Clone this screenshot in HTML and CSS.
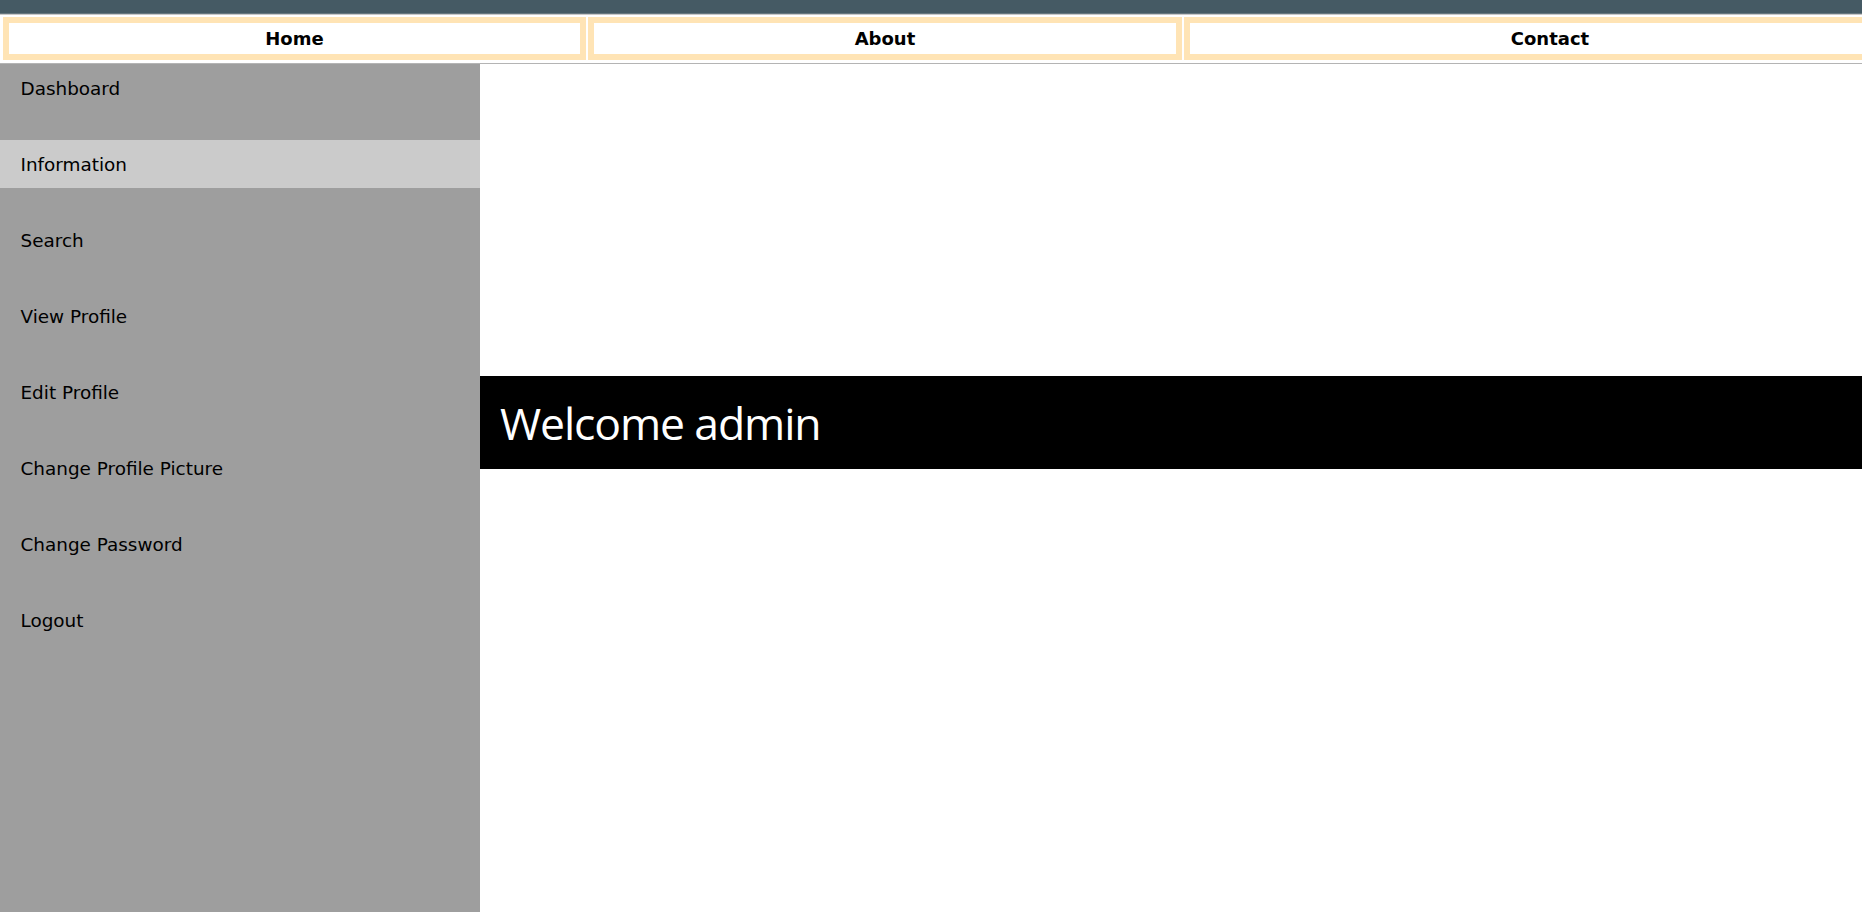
FILE: index.html
```html
<!DOCTYPE html>
<html lang="en">
<head>
<meta charset="utf-8">
<title>Dashboard</title>
<link rel="stylesheet" href="styles.css">
</head>
<body>
<div class="page">
  <div class="topbar"></div>
  <nav class="nav">
    <a class="nav-item nav-home" href="#">Home</a>
    <a class="nav-item nav-about" href="#">About</a>
    <a class="nav-item nav-contact" href="#">Contact</a>
  </nav>
  <div class="layout">
    <aside class="sidebar">
      <a class="side-item" href="#">Dashboard</a>
      <a class="side-item active" href="#">Information</a>
      <a class="side-item" href="#">Search</a>
      <a class="side-item" href="#">View Profile</a>
      <a class="side-item" href="#">Edit Profile</a>
      <a class="side-item" href="#">Change Profile Picture</a>
      <a class="side-item" href="#">Change Password</a>
      <a class="side-item" href="#">Logout</a>
    </aside>
    <main class="content">
      <h1 class="welcome">Welcome admin</h1>
    </main>
  </div>
</div>
</body>
</html>
```
FILE: styles.css
```css
html, body {
  margin: 0;
  padding: 0;
  height: 100%;
  overflow: hidden;
  background: #ffffff;
}

.page {
  width: 1862px;
  height: 912px;
  display: flex;
  flex-direction: column;
  overflow: hidden;
}

.topbar {
  height: 13px;
  background: #455a64;
  border-bottom: 1px solid #66767e;
  flex: none;
}

.nav {
  flex: none;
  display: grid;
  grid-template-columns: 583px 594px 732px;
  column-gap: 2px;
  padding: 2px 0 3px 3px;
  border-top: 1px solid #c8c8c8;
  border-bottom: 1px solid #b4b4b4;
  background: #ffffff;
}

.nav-item {
  height: 31px;
  border: 6px solid #ffe4b5;
  background: #ffffff;
  display: flex;
  align-items: center;
  justify-content: center;
  font-family: "DejaVu Sans", Verdana, sans-serif;
  font-weight: bold;
  font-size: 18px;
  color: #000000;
  text-decoration: none;
}

.layout {
  flex: 1;
  display: flex;
  min-height: 0;
}

.sidebar {
  width: 480px;
  flex: none;
  background: #9e9e9e;
  display: flex;
  flex-direction: column;
  gap: 28px;
}

.side-item {
  height: 48px;
  display: flex;
  align-items: center;
  padding-left: 20.5px;
  font-family: "DejaVu Sans", Verdana, sans-serif;
  font-size: 18.4px;
  color: #000000;
  text-decoration: none;
}

.side-item.active {
  background: #cbcbcb;
}

.content {
  flex: 1;
  padding-top: 312px;
  min-width: 0;
}

.welcome {
  margin: 0;
  height: 93px;
  background: #000000;
  color: #ffffff;
  display: flex;
  align-items: center;
  padding-left: 20px;
  font-family: "Open Sans", "Noto Sans", sans-serif;
  font-weight: 400;
  font-size: 44.5px;
  letter-spacing: -1.1px;
}
```
